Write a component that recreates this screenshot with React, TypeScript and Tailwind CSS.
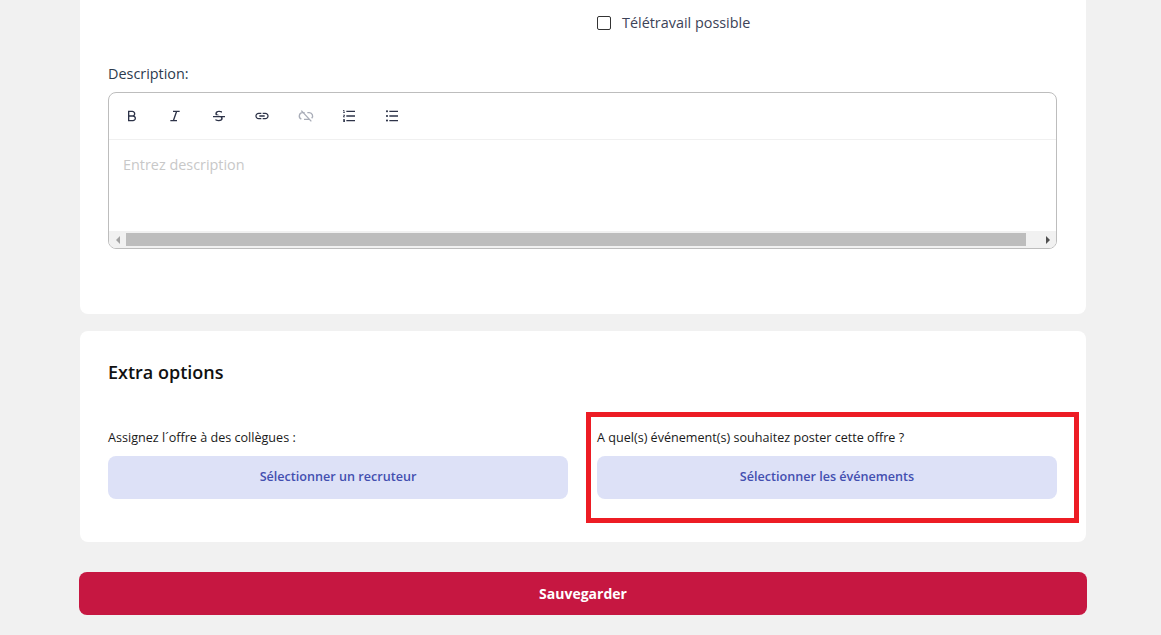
import { MdLink } from "react-icons/md";
import { RiBold, RiListOrdered, RiListUnordered, RiStrikethrough } from "react-icons/ri";

function ItalicIcon({ size, className }: { size: number; className: string }) {
  return (
    <svg width={size} height={size} viewBox="0 0 24 24" fill="none" stroke="currentColor" strokeWidth={2} className={className}>
      <path d="M9 5h10M5 19h10M14.5 5l-5 14" />
    </svg>
  );
}

function UnlinkIcon({ size, className }: { size: number; className: string }) {
  return (
    <svg width={size} height={size} viewBox="0 0 24 24" fill="none" stroke="currentColor" strokeWidth={2} className={className}>
      <path d="M10 7H7a5 5 0 0 0-2 9.6M14 7h3a5 5 0 0 1 3.5 8.5M9 17h8M5 4l15 16" />
    </svg>
  );
}

const tools = [
  { Icon: RiBold, cls: "text-[#2d3348]" },
  { Icon: ItalicIcon, cls: "text-[#2d3348]" },
  { Icon: RiStrikethrough, cls: "text-[#2d3348]" },
  { Icon: MdLink, cls: "text-[#2d3348]" },
  { Icon: UnlinkIcon, cls: "text-[#a9adb8]" },
  { Icon: RiListOrdered, cls: "text-[#2d3348]" },
  { Icon: RiListUnordered, cls: "text-[#2d3348]" },
];

function Field({ label, action }: { label: string; action: string }) {
  return (
    <div>
      <p className="text-[12.6px] leading-[16px] text-[#1a1a1a] mb-[10px]">{label}</p>
      <button className="w-full h-[43px] pb-[1px] rounded-lg bg-[#dde1f7] text-[#434fb0] text-[12.6px] font-semibold">
        {action}
      </button>
    </div>
  );
}

export default function App() {
  return (
    <div className="relative h-[635px] overflow-hidden bg-[#f1f1f1] font-['Open_Sans',sans-serif]">
      <div className="w-[1006px] ml-[80px] h-[314px] bg-white rounded-b-lg px-[28px] pt-[13px]">
        <div className="grid grid-cols-2 gap-x-[29px] w-[949px]">
          <div />
          <label className="flex items-center h-[20px] text-[14.4px] text-[#3c4257]">
            <span className="w-[14px] h-[14px] border border-[#333] rounded-[2px] mr-[11px]" />
            <span className="mb-[1px]">Télétravail possible</span>
          </label>
        </div>

        <p className="mt-[31px] text-[14.4px] leading-[20px] text-[#2d3b4e]">Description:</p>

        <div className="mt-[8px] w-[949px] h-[157px] border border-[#bdbdbd] rounded-lg overflow-hidden flex flex-col">
          <div className="h-[47px] flex items-center gap-[27.4px] pl-[15px] border-b border-[#f0f0f0]">
            {tools.map(({ Icon, cls }, i) => (
              <Icon key={i} size={16} className={cls} />
            ))}
          </div>
          <div className="flex-1 px-[14px] pt-[15px] text-[14.4px] leading-[20px] text-[#c8c8c8]">
            Entrez description
          </div>
          <div className="h-[17px] bg-[#f1f1f1] flex items-center">
            <span className="w-[17px] flex justify-center">
              <span className="border-y-[4px] border-y-transparent border-r-[4px] border-r-[#a3a3a3]" />
            </span>
            <div className="flex-1 h-[13px] bg-[#bdbdbd]" />
            <span className="w-[30px] flex justify-end pr-[6px]">
              <span className="border-y-[4px] border-y-transparent border-l-[4px] border-l-[#505050]" />
            </span>
          </div>
        </div>
      </div>

      <div className="w-[1006px] ml-[80px] mt-[17px] h-[211px] bg-white rounded-lg px-[28px] pt-[28px]">
        <h2 className="text-[18px] leading-[26px] font-semibold text-[#111]">Extra options</h2>
        <div className="mt-[45px] grid grid-cols-2 gap-x-[29px] w-[949px]">
          <Field label="Assignez l´offre à des collègues :" action="Sélectionner un recruteur" />
          <Field label="A quel(s) événement(s) souhaitez poster cette offre ?" action="Sélectionner les événements" />
        </div>
      </div>

      <button className="block w-[1008px] ml-[79px] mt-[30px] h-[43px] rounded-lg bg-[#c61741] text-white text-[14px] font-bold">
        Sauvegarder
      </button>

      <div className="absolute left-[586px] top-[412px] w-[493px] h-[111px] border-[5px] border-[#ed1c24]" />
    </div>
  );
}
